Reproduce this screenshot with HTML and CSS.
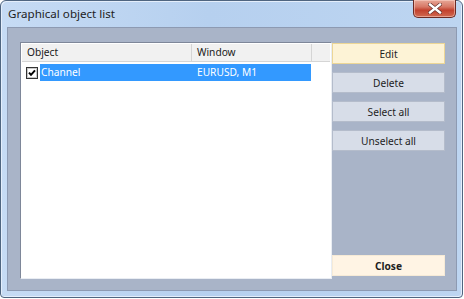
FILE: index.html
```html
<!DOCTYPE html>
<html>
<head>
<meta charset="utf-8">
<link rel="stylesheet" href="styles.css">
</head>
<body>
<div class="window">
  <div class="titlebar">
    <span class="title">Graphical object list</span>
    <div class="close-x">
      <svg width="14" height="11" viewBox="0 0 14 11"><path d="M2 1.5 L12 9.5 M12 1.5 L2 9.5" stroke="#5a2a26" stroke-width="3.6" stroke-linecap="square"/><path d="M2 1.5 L12 9.5 M12 1.5 L2 9.5" stroke="#ffffff" stroke-width="2.4" stroke-linecap="square"/></svg>
    </div>
  </div>
  <div class="client">
    <div class="listbox">
      <div class="header">
        <div class="hcell c1">Object</div>
        <div class="hcell c2">Window</div>
        <div class="hcell c3"></div>
      </div>
      <div class="row">
        <span class="check"><svg width="12" height="12" viewBox="0 0 12 12"><rect x="0.5" y="0.5" width="11" height="11" fill="#fff" stroke="#333"/><rect x="1.5" y="1.5" width="9" height="9" fill="none" stroke="#c8c8c8"/><path d="M3 5.6 L5 7.8 L9 3.4" fill="none" stroke="#000" stroke-width="2"/></svg></span>
        <div class="sel">
          <span class="cell-obj">Channel</span>
          <span class="cell-win">EURUSD, M1</span>
        </div>
      </div>
    </div>
    <div class="buttons">
      <div class="btn btn-default">Edit</div>
      <div class="btn">Delete</div>
      <div class="btn">Select all</div>
      <div class="btn">Unselect all</div>
      <div class="btn btn-close">Close</div>
    </div>
  </div>
</div>
</body>
</html>
```

FILE: styles.css
```css
html, body {
  margin: 0;
  padding: 0;
  background: #ffffff;
}
body {
  width: 464px;
  height: 299px;
  overflow: hidden;
  font-family: "Noto Sans", sans-serif;
}
.window {
  box-sizing: border-box;
  width: 463px;
  height: 298px;
  border: 1px solid #4f6580;
  border-radius: 6px 6px 4px 4px;
  background: linear-gradient(to right, #c6dbf4 0%, #b6d0ef 45%, #bdd5f1 100%);
  box-shadow: inset 1px 1px 0 #e4eefb, inset -1px -1px 0 #e4eefb;
  display: flex;
  flex-direction: column;
}
.titlebar {
  height: 26px;
  display: flex;
  align-items: flex-start;
  padding-left: 7px;
}
.title {
  font-size: 11.6px;
  color: #1e1e1e;
  margin-top: 5px;
}
.close-x {
  margin-left: auto;
  margin-right: 6px;
  margin-top: -1px;
  width: 43px;
  height: 18px;
  box-sizing: border-box;
  border: 1px solid #6b2a24;
  border-top: none;
  border-radius: 0 0 5px 5px;
  background: linear-gradient(to bottom, #e7a898 0%, #d77866 40%, #c2412e 60%, #d06a52 100%);
  box-shadow: inset 0 0 0 1px rgba(255, 220, 210, 0.5);
  display: flex;
  align-items: center;
  justify-content: center;
}
.close-x svg { display: block; }
.client {
  flex: 1;
  margin: 0 5px 6px 6px;
  background: #a9b4c8;
  border: 1px solid #8d9ab2;
  display: flex;
  padding: 14px 11px 11px 12px;
}
.listbox {
  box-sizing: border-box;
  width: 312px;
  background: #ffffff;
  border: 1px solid #7e8799;
  border-right-color: #e9edf3;
  border-bottom-color: #e9edf3;
  padding: 1px;
}
.header {
  display: flex;
  height: 17px;
  background: #f1f1f1;
  border-bottom: 1px solid #d5d5d5;
  font-size: 10.2px;
  color: #1a1a1a;
}
.hcell {
  box-sizing: border-box;
  padding-left: 5px;
  line-height: 17px;
  border-right: 1px solid #d5d5d5;
}
.c1 { width: 170px; }
.c2 { width: 120px; }
.c3 { flex: 1; border-right: none; }
.row {
  display: flex;
  align-items: center;
  margin-top: 2px;
  height: 17px;
  padding-left: 4px;
}
.check {
  width: 12px;
  height: 12px;
  margin-right: 2px;
}
.check svg { display: block; }
.sel {
  display: flex;
  width: 271px;
  height: 17px;
  background: #3399ff;
  color: #ffffff;
  font-size: 10.2px;
  line-height: 17px;
}
.cell-obj { width: 156px; padding-left: 1px; }
.cell-win { flex: 1; }
.buttons {
  width: 113px;
  display: flex;
  flex-direction: column;
  gap: 8px;
  padding-top: 1px;
}
.btn {
  box-sizing: border-box;
  height: 21px;
  background: #d7dde8;
  border: 1px solid #b4bccb;
  font-size: 10.2px;
  color: #1e1e1e;
  display: flex;
  align-items: center;
  justify-content: center;
}
.btn-default {
  background: #fdf3d6;
  border-color: #ecd696;
}
.btn-close {
  margin-top: auto;
  margin-bottom: 3px;
  background: #fff4e4;
  border-color: #f6ead6;
  font-weight: bold;
}
```
